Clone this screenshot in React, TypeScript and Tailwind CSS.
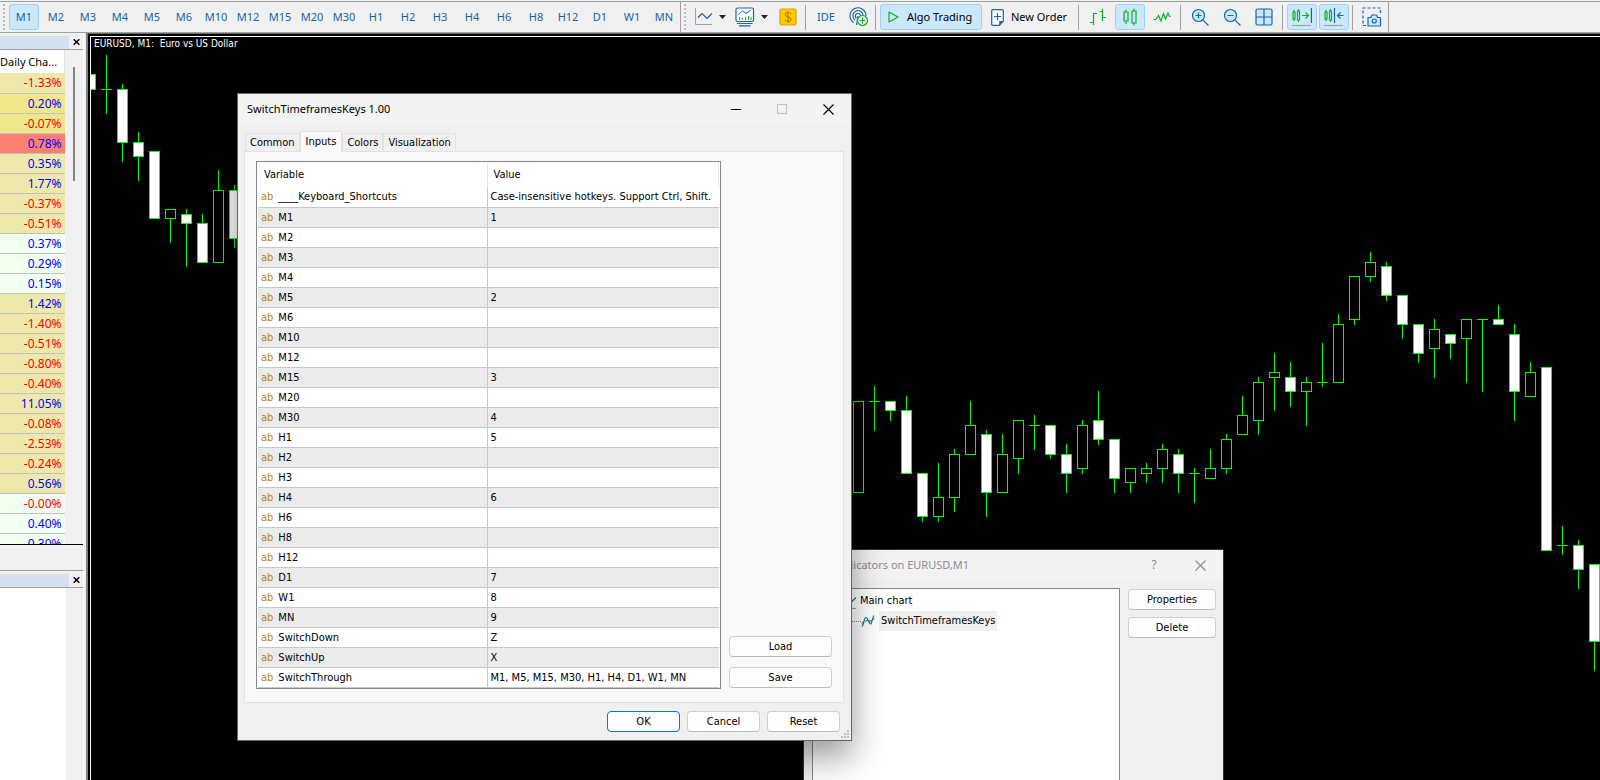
import { useState } from 'react';
import type { ReactNode } from 'react';

const TIMEFRAMES = [
  'M1', 'M2', 'M3', 'M4', 'M5', 'M6', 'M10', 'M12', 'M15', 'M20', 'M30',
  'H1', 'H2', 'H3', 'H4', 'H6', 'H8', 'H12', 'D1', 'W1', 'MN',
];

type Tone = 'pale' | 'khaki' | 'salmon' | 'mint';

const toneClass: Record<Tone, string> = {
  pale: 'bg-[#eee8aa]',
  khaki: 'bg-[#f0e68c]',
  salmon: 'bg-[#fa8072]',
  mint: 'bg-[#f0fff0]',
};

const dailyChanges: [string, Tone][] = [
  ['-1.33%', 'pale'],
  ['0.20%', 'khaki'],
  ['-0.07%', 'khaki'],
  ['0.78%', 'salmon'],
  ['0.35%', 'pale'],
  ['1.77%', 'pale'],
  ['-0.37%', 'pale'],
  ['-0.51%', 'pale'],
  ['0.37%', 'mint'],
  ['0.29%', 'mint'],
  ['0.15%', 'mint'],
  ['1.42%', 'pale'],
  ['-1.40%', 'pale'],
  ['-0.51%', 'pale'],
  ['-0.80%', 'pale'],
  ['-0.40%', 'pale'],
  ['11.05%', 'pale'],
  ['-0.08%', 'pale'],
  ['-2.53%', 'pale'],
  ['-0.24%', 'pale'],
  ['0.56%', 'pale'],
  ['-0.00%', 'mint'],
  ['0.40%', 'mint'],
  ['0.30%', 'mint'],
];

const inputRows: [string, string][] = [
  ['____Keyboard_Shortcuts', 'Case-insensitive hotkeys. Support Ctrl, Shift.'],
  ['M1', '1'],
  ['M2', ''],
  ['M3', ''],
  ['M4', ''],
  ['M5', '2'],
  ['M6', ''],
  ['M10', ''],
  ['M12', ''],
  ['M15', '3'],
  ['M20', ''],
  ['M30', '4'],
  ['H1', '5'],
  ['H2', ''],
  ['H3', ''],
  ['H4', '6'],
  ['H6', ''],
  ['H8', ''],
  ['H12', ''],
  ['D1', '7'],
  ['W1', '8'],
  ['MN', '9'],
  ['SwitchDown', 'Z'],
  ['SwitchUp', 'X'],
  ['SwitchThrough', 'M1, M5, M15, M30, H1, H4, D1, W1, MN'],
];

// [x, high, bodyTop, bodyBottom, low, filled]
type Candle = [number, number, number, number, number, 0 | 1];

const candles: Candle[] = [
  [90, 74, 74, 90, 90, 1],
  [106, 55, 89, 90, 114, 0],
  [122, 84, 89, 143, 162, 1],
  [138, 132, 142, 157, 181, 1],
  [154, 151, 151, 219, 219, 1],
  [170, 209, 209, 219, 243, 0],
  [186, 209, 214, 224, 267, 1],
  [202, 214, 223, 263, 263, 1],
  [218, 170, 190, 263, 263, 0],
  [234, 185, 190, 239, 248, 1],
  [858, 401, 401, 493, 493, 0],
  [874, 386, 401, 402, 431, 0],
  [890, 401, 401, 411, 421, 1],
  [906, 396, 410, 474, 474, 1],
  [922, 473, 473, 517, 522, 1],
  [938, 463, 497, 517, 522, 0],
  [954, 449, 454, 498, 512, 0],
  [970, 401, 425, 455, 455, 0],
  [986, 430, 434, 493, 517, 1],
  [1002, 434, 454, 493, 493, 0],
  [1018, 420, 420, 459, 474, 0],
  [1034, 415, 425, 426, 450, 0],
  [1050, 425, 425, 455, 459, 1],
  [1066, 444, 454, 474, 493, 1],
  [1082, 420, 425, 469, 474, 0],
  [1098, 391, 420, 440, 445, 1],
  [1114, 439, 439, 479, 493, 1],
  [1130, 468, 468, 483, 493, 0],
  [1146, 463, 468, 474, 483, 0],
  [1162, 444, 449, 469, 483, 0],
  [1178, 449, 454, 474, 493, 1],
  [1194, 468, 473, 474, 503, 0],
  [1210, 449, 468, 479, 479, 0],
  [1226, 434, 439, 469, 474, 0],
  [1242, 396, 415, 435, 435, 0],
  [1258, 377, 382, 421, 435, 0],
  [1274, 353, 372, 378, 411, 0],
  [1290, 362, 377, 392, 407, 1],
  [1306, 377, 382, 392, 426, 0],
  [1322, 343, 382, 383, 387, 0],
  [1338, 314, 324, 383, 383, 0],
  [1354, 276, 276, 320, 325, 0],
  [1370, 252, 262, 277, 282, 0],
  [1386, 262, 266, 296, 301, 1],
  [1402, 295, 295, 325, 339, 1],
  [1418, 324, 324, 354, 363, 1],
  [1434, 319, 329, 349, 378, 0],
  [1450, 334, 334, 344, 359, 1],
  [1466, 319, 319, 339, 383, 0],
  [1482, 319, 319, 320, 392, 0],
  [1498, 305, 319, 325, 325, 1],
  [1514, 324, 334, 392, 421, 1],
  [1530, 362, 372, 397, 397, 0],
  [1546, 367, 367, 551, 551, 1],
  [1562, 526, 545, 546, 555, 0],
  [1578, 540, 545, 570, 589, 1],
  [1594, 564, 564, 642, 671, 1],
];

function CandleChart() {
  return (
    <svg className="block h-[743px] w-[1509px]" viewBox="91 37 1509 743" shapeRendering="crispEdges" aria-hidden="true">
      {candles.map(([x, high, top, bottom, low, filled]) => (
        <g key={x}>
          <rect x={x} y={high} width={1} height={low - high} fill="#00ff00" />
          {bottom - top <= 1 ? (
            <rect x={x - 5} y={top} width={11} height={1} fill="#00ff00" />
          ) : (
            <>
              <rect x={x - 5} y={top} width={11} height={bottom - top} fill="#00ff00" />
              <rect x={x - 4} y={top + 1} width={9} height={bottom - top - 2} fill={filled ? '#ffffff' : '#000000'} />
            </>
          )}
        </g>
      ))}
    </svg>
  );
}

/* ---------- toolbar ---------- */

function Grip() {
  return (
    <svg className="h-[26px] w-[2px] shrink-0" viewBox="0 0 2 26" fill="#b8b8b8" aria-hidden="true">
      {[0, 4, 8, 12, 16, 20, 24].map((y) => (
        <rect key={y} y={y} width="2" height="2" />
      ))}
    </svg>
  );
}

function Separator() {
  return <div className="h-[25px] w-px shrink-0 bg-[#a0a0a0]" />;
}

function Caret() {
  return (
    <svg className="h-[4px] w-[7px] shrink-0" viewBox="0 0 7 4" fill="#222" aria-hidden="true">
      <path d="M0 0h7L3.500 4z" />
    </svg>
  );
}

function ToolButton({ label, active, children }: { label: string; active?: boolean; children: ReactNode }) {
  return (
    <button
      type="button"
      aria-label={label}
      className={`flex h-[26px] w-[30px] shrink-0 items-center justify-center rounded-[3px] border ${
        active ? 'border-[#99d1ff] bg-[#cce8ff]' : 'border-transparent'
      }`}
    >
      {children}
    </button>
  );
}

function LineStudyIcon() {
  return (
    <svg className="h-[18px] w-[18px] shrink-0" viewBox="0 0 18 18" fill="none" aria-hidden="true">
      <path d="M.5 0v16.500H17" stroke="#a0a0a0" />
      <path d="M3 9.500l4-4 5 5 5-5" stroke="#1565a8" strokeWidth="1.200" />
    </svg>
  );
}

function IndicatorsIcon() {
  return (
    <svg className="h-5 w-5 shrink-0" viewBox="0 0 20 20" fill="none" aria-hidden="true">
      <rect x="1" y="1" width="17.500" height="13.500" rx="1.500" fill="#fff" stroke="#1565a8" strokeWidth="1.200" />
      <path d="M3.500 7.500l4-3.500 3.500 2.500L16 3" stroke="#1565a8" />
      <path d="M4.500 10v3M7.500 11v2M10.500 10v3M13.500 9v4M16 10v3" stroke="#10b020" />
      <path d="M2 16.500h15.500M4 18.800h11.500" stroke="#1565a8" strokeWidth="1.200" />
    </svg>
  );
}

function DollarIcon() {
  return (
    <svg className="h-[18px] w-[18px] shrink-0" viewBox="0 0 18 18" fill="none" aria-hidden="true">
      <rect x="1" y="1" width="16" height="16" rx="1.500" fill="#ffcc00" stroke="#e0a000" strokeWidth="1.200" />
      <path d="M12 6c-.5-1-1.500-1.500-3-1.500S6.200 5.200 6.200 6.700C6.200 9.500 12 8.200 12 11.200c0 1.500-1.300 2.300-3 2.300s-2.700-.6-3.200-1.700M9 3v12" stroke="#c08000" strokeWidth="1.200" />
    </svg>
  );
}

function SignalIcon() {
  return (
    <svg className="h-5 w-5 shrink-0" viewBox="0 0 20 20" fill="none" aria-hidden="true">
      <path d="M4.500 15.500A8 8 0 1 1 17 9" stroke="#1565a8" strokeWidth="1.100" />
      <path d="M6.200 13.200A5.200 5.200 0 1 1 14.200 9" stroke="#1565a8" strokeWidth="1.100" />
      <path d="M7.500 11.200A2.600 2.600 0 1 1 11.600 9" stroke="#1565a8" strokeWidth="1.100" />
      <path d="M9 9l-1.500 9" stroke="#1565a8" strokeWidth="1.100" />
      <circle cx="13.500" cy="13.500" r="5" fill="#f0f0f0" stroke="#10b020" strokeWidth="1.200" />
      <path d="M13.500 10.500v6M10.500 13.500h6" stroke="#10b020" strokeWidth="1.200" />
    </svg>
  );
}

function PlayIcon() {
  return (
    <svg className="h-3 w-[11px] shrink-0" viewBox="0 0 11 12" fill="none" aria-hidden="true">
      <path d="M1 1l9 5-9 5z" stroke="#10b020" strokeWidth="1.200" strokeLinejoin="round" />
    </svg>
  );
}

function NewOrderIcon() {
  return (
    <svg className="h-[17px] w-[13px] shrink-0" viewBox="0 0 13 17" fill="none" aria-hidden="true">
      <path d="M1.800.7h9.400q1.100 0 1.100 1.100V12l-4 4.300H1.800Q.7 16.300.7 15.200V1.800Q.7.7 1.800.7z" fill="#fff" stroke="#1565a8" strokeWidth="1.200" />
      <path d="M8.200 16.300V12h4.100z" fill="#1565a8" />
      <path d="M6.500 4v7M3 7.500h7" stroke="#1565a8" strokeWidth="1.200" />
    </svg>
  );
}

function BarsIcon() {
  return (
    <svg className="h-[18px] w-[18px] shrink-0" viewBox="0 0 18 18" fill="none" stroke="#10b020" strokeWidth="1.200" aria-hidden="true">
      <path d="M4.500 5v12M1 14.500h3.500M4.500 5.500H8M13.500 1v12M10.500 3.500h3M13.500 9.500H17" />
    </svg>
  );
}

function CandlesIcon() {
  return (
    <svg className="h-[18px] w-4 shrink-0" viewBox="0 0 16 18" fill="none" stroke="#10b020" strokeWidth="1.200" aria-hidden="true">
      <path d="M2 4h4v9H2zM4 1.500V4M4 13v3M10 3h4v12h-4zM12 .5V3M12 15v2.500" />
    </svg>
  );
}

function LineChartIcon() {
  return (
    <svg className="h-3 w-[18px] shrink-0" viewBox="0 0 18 12" fill="none" stroke="#10b020" strokeWidth="1.200" aria-hidden="true">
      <path d="M.5 8.500h2.500l2.500-4 2.500 5.500 2.500-7.500 2 5.500 2.500-6 1.500 3.500H17.500" />
    </svg>
  );
}

function ZoomIcon({ plus }: { plus?: boolean }) {
  return (
    <svg className="h-[18px] w-[18px] shrink-0" viewBox="0 0 18 18" fill="none" stroke="#1565a8" strokeWidth="1.200" aria-hidden="true">
      <circle cx="7.500" cy="7.500" r="6" fill="#cce8ff" />
      <path d="M11.800 11.800L17.500 17.500M4.500 7.500h6" />
      {plus && <path d="M7.500 4.500v6" />}
    </svg>
  );
}

function TileIcon() {
  return (
    <svg className="h-[18px] w-[18px] shrink-0" viewBox="0 0 18 18" fill="none" stroke="#1565a8" strokeWidth="1.200" aria-hidden="true">
      <rect x="1" y="1" width="16" height="16" rx="1.500" fill="#cce8ff" />
      <path d="M9 1v16M1 9h16" />
    </svg>
  );
}

function ShiftIcon({ back }: { back?: boolean }) {
  return (
    <svg className="h-5 w-5 shrink-0" viewBox="0 0 20 20" fill="none" strokeWidth="1.200" aria-hidden="true">
      <path d="M1 5h2v7H1zM2 3v2M2 12v2M5.500 4h2v9h-2zM6.500 2v2M6.500 13v2" stroke="#10b020" />
      {back ? (
        <>
          <path d="M10.500 1v15" stroke="#1565a8" />
          <path d="M19.500 8.500h-6M16.500 5.500l-3 3 3 3" stroke="#1565a8" />
        </>
      ) : (
        <>
          <path d="M19.400 1v15" stroke="#1565a8" />
          <path d="M10 8.500h6M13.500 5.500l3 3-3 3" stroke="#10b020" />
        </>
      )}
      <path d="M0 18.500h19" stroke="#a0a0a0" />
    </svg>
  );
}

function CameraIcon() {
  return (
    <svg className="h-5 w-5 shrink-0" viewBox="0 0 20 20" fill="none" stroke="#1565a8" strokeWidth="1.200" aria-hidden="true">
      <path d="M4 18.500H1V1h17.500v6" strokeDasharray="3 2" />
      <path d="M6 10.500h3l1-2.500h4.500l1 2.500h3v8.500H6z" fill="#cce8ff" strokeLinejoin="round" />
      <circle cx="12.300" cy="14" r="2" />
    </svg>
  );
}

function Toolbar({ timeframe, onPick }: { timeframe: string; onPick: (tf: string) => void }) {
  return (
    <header className="flex h-8 shrink-0 items-center border-t border-b border-t-[#a0a0a0] border-b-[#a0a0a0] bg-[#f0f0f0]">
      <div className="flex h-full shrink-0 items-center border-r border-[#a0a0a0] pr-px pl-[3px]">
        <Grip />
        <nav className="ml-1 flex gap-[2px] text-[#1565a8]">
          {TIMEFRAMES.map((tf) => (
            <button
              key={tf}
              type="button"
              onClick={() => onPick(tf)}
              className={`h-[26px] w-[30px] rounded-[3px] border text-center ${
                tf === timeframe ? 'border-[#99d1ff] bg-[#cce8ff]' : 'border-transparent'
              }`}
            >
              {tf}
            </button>
          ))}
        </nav>
      </div>
      <div className="flex h-full shrink-0 items-center border-r border-[#a0a0a0] pr-px pl-[3px]">
        <Grip />
        <button type="button" aria-label="Line studies" className="ml-[9px] flex items-center gap-[6px]">
          <LineStudyIcon />
          <Caret />
        </button>
        <button type="button" aria-label="Indicators" className="ml-[9px] flex items-center gap-[6px]">
          <IndicatorsIcon />
          <Caret />
        </button>
        <button type="button" aria-label="Market" className="mr-2 ml-[11px]">
          <DollarIcon />
        </button>
        <Separator />
        <button type="button" className="ml-[11px] text-[#1565a8]">IDE</button>
        <button type="button" aria-label="Signals" className="mr-[6px] ml-[14px]">
          <SignalIcon />
        </button>
        <Separator />
        <button
          type="button"
          className="ml-1 flex h-[26px] w-[102px] items-center gap-2 rounded-[3px] border border-[#99d1ff] bg-[#cce8ff] pl-[7px]"
        >
          <PlayIcon />
          Algo Trading
        </button>
        <button type="button" className="mr-[11px] ml-[9px] flex items-center gap-[7px]">
          <NewOrderIcon />
          New Order
        </button>
        <Separator />
        <div className="mr-[3px] ml-1 flex gap-[2px]">
          <ToolButton label="Bar chart"><BarsIcon /></ToolButton>
          <ToolButton label="Candlesticks" active><CandlesIcon /></ToolButton>
          <ToolButton label="Line chart"><LineChartIcon /></ToolButton>
        </div>
        <Separator />
        <div className="mr-[3px] ml-1 flex gap-[2px]">
          <ToolButton label="Zoom in"><ZoomIcon plus /></ToolButton>
          <ToolButton label="Zoom out"><ZoomIcon /></ToolButton>
          <ToolButton label="Tile windows"><TileIcon /></ToolButton>
        </div>
        <Separator />
        <div className="mr-[3px] ml-1 flex gap-[2px]">
          <ToolButton label="Auto scroll" active><ShiftIcon /></ToolButton>
          <ToolButton label="Chart shift" active><ShiftIcon back /></ToolButton>
        </div>
        <Separator />
        <div className="ml-1 flex">
          <ToolButton label="Screenshot"><CameraIcon /></ToolButton>
        </div>
      </div>
    </header>
  );
}

/* ---------- left dock ---------- */

function PanelTitle() {
  return (
    <div className="flex h-[15px] shrink-0 items-center border-b border-[#a0a0a0]">
      <div className="h-[13px] flex-1 bg-[#d4e0ee]" />
      <button type="button" aria-label="Close panel" className="flex w-[14px] justify-center">
        <svg className="h-[6px] w-[7px]" viewBox="0 0 7 6" stroke="#000" strokeWidth="1.500" aria-hidden="true">
          <path d="M.7.300l5.600 5.400M6.300.300L.7 5.700" />
        </svg>
      </button>
    </div>
  );
}

function MarketWatch() {
  return (
    <section className="flex h-[537px] shrink-0 flex-col border-r border-white pt-[2px]">
      <PanelTitle />
      <div className="flex h-[495px] shrink-0 overflow-hidden border-b border-black">
        <table className="h-max w-[65px] shrink-0 border-collapse">
          <thead>
            <tr className="h-[23px] bg-white">
              <th className="border-r border-[#e0e0e0] p-0 text-left font-normal whitespace-nowrap">Daily Cha...</th>
            </tr>
          </thead>
          <tbody>
            {dailyChanges.map(([value, tone], i) => (
              <tr key={i} className={`h-5 border-b border-[#c0c0c0] ${toneClass[tone]}`}>
                <td className={`p-0 pr-[3px] text-right text-[12px] leading-[19px] ${value.startsWith('-') ? 'text-[#ff0000]' : 'text-[#0000ff]'}`}>
                  {value}
                </td>
              </tr>
            ))}
          </tbody>
        </table>
        <div className="flex flex-1 justify-center pt-[17px]">
          <div className="h-[114px] w-[2px] bg-[#858585]" />
        </div>
      </div>
    </section>
  );
}

function Navigator() {
  return (
    <section className="flex flex-1 flex-col border-t border-r border-t-[#a0a0a0] border-r-white pt-[2px]">
      <PanelTitle />
      <div className="w-[66px] flex-1 bg-white" />
    </section>
  );
}

/* ---------- dialogs ---------- */

function PushButton({ className = '', primary, children }: { className?: string; primary?: boolean; children: ReactNode }) {
  return (
    <button
      type="button"
      className={`h-[21px] rounded-[4px] border bg-[#fdfdfd] text-center leading-[19px] ${
        primary ? 'border-[#0078d4]' : 'border-[#d0d0d0] border-b-[#bbbbbb]'
      } ${className}`}
    >
      {children}
    </button>
  );
}

function CloseIcon({ color }: { color: string }) {
  return (
    <svg className="h-[11px] w-[11px]" viewBox="0 0 11 11" stroke={color} strokeWidth="1.100" aria-hidden="true">
      <path d="M.5.5l10 10M10.500.5l-10 10" />
    </svg>
  );
}

function CurveIcon() {
  return (
    <svg className="h-3 w-[14px] shrink-0" viewBox="0 0 14 12" fill="none" strokeWidth="1.200" aria-hidden="true">
      <path d="M1 11.500C3 9 3 2.500 5 2.500S8 9 9.500 9 11 3 13 .5" stroke="#1565a8" />
      <path d="M.5 8C3 8 4 5.500 6 5.500s3 1.500 4.500 0L13.500 3.500" stroke="#10b020" strokeDasharray="3 1" />
    </svg>
  );
}

function IndicatorsDialog() {
  return (
    <section
      aria-label="Indicators on EURUSD,M1"
      className="absolute top-[549px] left-[803px] flex h-[300px] w-[421px] flex-col border border-[#333] bg-[#f0f0f0] font-['DejaVu_Sans_Condensed',sans-serif]"
    >
      <div className="flex h-[30px] shrink-0 items-center bg-[#f3f3f3] pl-2 font-['Noto_Sans',sans-serif] text-[#8c8c8c]">
        <LineStudyIcon />
        <h2 className="ml-[6px] flex-1">Indicators on EURUSD,M1</h2>
        <button type="button" aria-label="Help" className="w-[46px] text-[12px]">?</button>
        <button type="button" aria-label="Close" className="flex w-[46px] justify-center">
          <CloseIcon color="#8c8c8c" />
        </button>
      </div>
      <div className="flex flex-1 gap-2 pt-2 pr-[7px] pl-2">
        <ul className="flex-1 border border-[#828790] bg-white pt-[2px]">
          <li className="flex h-5 items-center gap-[3px] pl-[26px]">
            <LineStudyIcon />
            Main chart
          </li>
          <li className="flex h-5 items-center pl-[26px]">
            <span className="w-[22px] border-t border-dotted border-[#808080]" />
            <CurveIcon />
            <span className="ml-1 bg-[#f0f0f0] px-[2px] leading-5">SwitchTimeframesKeys</span>
          </li>
        </ul>
        <div className="flex w-[88px] flex-col gap-[7px] pt-[1px]">
          <PushButton>Properties</PushButton>
          <PushButton>Delete</PushButton>
        </div>
      </div>
    </section>
  );
}

const tabs = ['Common', 'Inputs', 'Colors', 'Visualization'];

function InputsDialog() {
  const [tab, setTab] = useState('Inputs');

  return (
    <section
      aria-label="SwitchTimeframesKeys 1.00"
      className="absolute top-[93px] left-[237px] w-[615px] border border-[#666] bg-[#f0f0f0] font-['DejaVu_Sans_Condensed',sans-serif] shadow-[0_16px_32px_rgba(0,0,0,0.4)]"
    >
      <div className="flex h-[30px] items-center bg-[#f3f3f3] pl-[9px] font-['Noto_Sans',sans-serif]">
        <h2 className="flex-1">SwitchTimeframesKeys 1.00</h2>
        <button type="button" aria-label="Minimize" className="flex w-[46px] justify-center">
          <span className="h-px w-[10px] bg-black" />
        </button>
        <button type="button" aria-label="Maximize" disabled className="flex w-[46px] justify-center">
          <span className="h-[10px] w-[10px] border border-[#c0c0c0]" />
        </button>
        <button type="button" aria-label="Close" className="flex w-[46px] justify-center">
          <CloseIcon color="#000" />
        </button>
      </div>

      <div role="tablist" className="mt-[7px] flex items-end pl-[7px]">
        {tabs.map((name) => (
          <button
            key={name}
            type="button"
            role="tab"
            aria-selected={tab === name}
            onClick={() => setTab(name)}
            className={
              tab === name
                ? '-mb-px h-[21px] border border-b-0 border-[#e2e2e2] bg-[#f9f9f9] px-[5px]'
                : 'h-[18px] border border-b-0 border-[#e2e2e2] px-1 pt-px'
            }
          >
            {name}
          </button>
        ))}
      </div>

      <div className="mr-[7px] ml-[6px] flex gap-2 border border-[#e2e2e2] bg-[#f9f9f9] pt-[9px] pr-[11px] pb-[13px] pl-[11px]">
        <div className="flex-1 border border-[#828790] bg-white px-px pt-px">
          <table className="w-full table-fixed border-collapse">
            <thead>
              <tr className="h-6 text-left">
                <th className="w-[229px] border-r border-[#e5e5e5] p-0 pl-[6px] font-normal">Variable</th>
                <th className="border-r border-[#e5e5e5] p-0 pl-[6px] font-normal">Value</th>
              </tr>
            </thead>
            <tbody>
              {inputRows.map(([name, value], i) => (
                <tr key={name} className={`h-5 border-b border-[#c8c8c8] ${i % 2 ? 'bg-[#ebebeb]' : 'bg-white'}`}>
                  <td className="border-r border-[#c8c8c8] p-0 pl-[3px] leading-[19px]">
                    <span className="mr-[5px] text-[#b8860b]">ab</span>
                    {name}
                  </td>
                  <td className="p-0 pl-[3px] leading-[19px] whitespace-nowrap">{value}</td>
                </tr>
              ))}
            </tbody>
          </table>
        </div>
        <div className="flex w-[103px] flex-col justify-end gap-[10px] pb-px">
          <PushButton>Load</PushButton>
          <PushButton>Save</PushButton>
        </div>
      </div>

      <div className="flex justify-end gap-[7px] pt-2 pr-[11px] pb-2">
        <PushButton primary className="w-[73px]">OK</PushButton>
        <PushButton className="w-[73px]">Cancel</PushButton>
        <PushButton className="w-[73px]">Reset</PushButton>
      </div>

      <svg className="absolute right-[2px] bottom-[2px] h-2 w-2" viewBox="0 0 8 8" fill="#bfbfbf" aria-hidden="true">
        <path d="M6 0h2v2H6zM3 3h2v2H3zM6 3h2v2H6zM0 6h2v2H0zM3 6h2v2H3zM6 6h2v2H6z" />
      </svg>
    </section>
  );
}

export default function App() {
  const [timeframe, setTimeframe] = useState('M1');

  return (
    <div className="relative flex h-screen flex-col overflow-hidden bg-[#f0f0f0] pt-px font-['Noto_Sans',sans-serif] text-[11px] leading-4 text-black">
      <Toolbar timeframe={timeframe} onPick={setTimeframe} />
      <div className="flex min-h-0 flex-1">
        <aside className="flex w-[88px] shrink-0 flex-col border-r-2 border-[#808080] pr-[2px]">
          <MarketWatch />
          <Navigator />
        </aside>
        <main className="relative min-w-0 flex-1 overflow-hidden border-t border-[#696969] bg-black pt-[2px] pl-[2px]">
          <div className="h-full overflow-hidden border-t border-l border-white">
            <CandleChart />
          </div>
          <h1 className="absolute top-[2px] left-[6px] font-['DejaVu_Sans_Condensed',sans-serif] text-[10px] whitespace-pre text-white">
            EURUSD, M1:  Euro vs US Dollar
          </h1>
        </main>
      </div>
      <IndicatorsDialog />
      <InputsDialog />
    </div>
  );
}
